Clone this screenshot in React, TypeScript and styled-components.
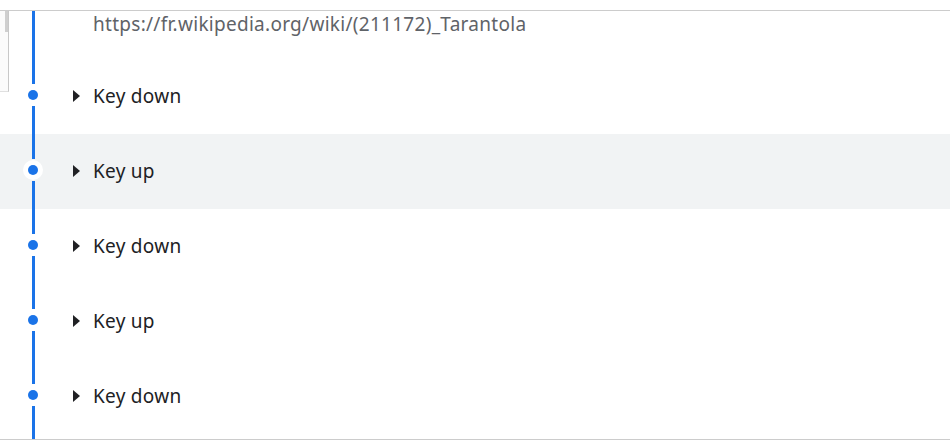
import React from "react";
import styled, { createGlobalStyle } from "styled-components";

const Global = createGlobalStyle`
  html, body { margin: 0; padding: 0; background: #fff; }
  body { font-family: "Noto Sans", "Open Sans", sans-serif; }
  #root { width: 950px; height: 445px; overflow: hidden; }
`;

const Page = styled.div`
  position: relative;
  height: 445px;
  padding-top: 10px;
  box-sizing: border-box;
  display: flex;
  flex-direction: column;
`;

const Frame = styled.div`
  border-top: 1px solid #cccccc;
  border-bottom: 1px solid #cccccc;
  height: 428px;
  display: flex;
  flex-direction: column;
  overflow: hidden;
`;

const SidePane = styled.div`
  position: absolute;
  left: 0;
  top: 11px;
  width: 8px;
  height: 80px;
  border-right: 1px solid #c8c8c8;
  border-bottom: 1px solid #e0e0e0;
  background: #fbfbfb;
  display: flex;
  justify-content: flex-end;
`;

const SideThumb = styled.div`
  width: 3px;
  height: 21px;
  background: #cfcfcf;
`;

const Row = styled.div<{ $h: number; $active?: boolean }>`
  height: ${(p) => p.$h}px;
  flex: 0 0 auto;
  display: flex;
  background: ${(p) => (p.$active ? "#f1f3f4" : "transparent")};
`;

const Gutter = styled.div`
  width: 66px;
  flex: 0 0 66px;
  display: flex;
  flex-direction: column;
  align-items: center;
`;

const Segment = styled.div<{ $fixed?: number }>`
  width: 3px;
  background: #1a73e8;
  flex: ${(p) => (p.$fixed !== undefined ? `0 0 ${p.$fixed}px` : "1 1 auto")};
`;

const Dot = styled.div`
  width: 20px;
  height: 20px;
  margin: 1px 0;
  border-radius: 50%;
  background: #ffffff;
  display: flex;
  align-items: center;
  justify-content: center;
  &::after {
    content: "";
    width: 10px;
    height: 10px;
    border-radius: 50%;
    background: #1a73e8;
  }
`;

const Body = styled.div`
  flex: 1;
  display: flex;
  align-items: flex-start;
`;

const Url = styled.div`
  margin-left: 27px;
  padding-top: 1px;
  font-size: 19px;
  letter-spacing: 0.28px;
  line-height: 24px;
  color: #5f6368;
  white-space: nowrap;
`;

const Entry = styled.div`
  display: flex;
  align-items: center;
  height: 73px;
  margin-left: 7px;
`;

const Caret = styled.span`
  width: 0;
  height: 0;
  border-top: 6px solid transparent;
  border-bottom: 6px solid transparent;
  border-left: 7px solid #202124;
  margin-right: 13px;
`;

const Label = styled.span`
  font-size: 19px;
  letter-spacing: 0.28px;
  line-height: 24px;
  color: #202124;
  white-space: nowrap;
`;

const Tail = styled.div`
  flex: 1;
  display: flex;
`;

const events = ["Key down", "Key up", "Key down", "Key up", "Key down"];

export default function App() {
  return (
    <>
      <Global />
      <Page>
        <Frame>
          <Row $h={48}>
            <Gutter>
              <Segment />
            </Gutter>
            <Body>
              <Url>https://fr.wikipedia.org/wiki/(211172)_Tarantola</Url>
            </Body>
          </Row>
          {events.map((e, i) => (
            <Row key={i} $h={75} $active={i === 1}>
              <Gutter>
                <Segment $fixed={25} />
                <Dot />
                <Segment />
              </Gutter>
              <Body>
                <Entry>
                  <Caret />
                  <Label>{e}</Label>
                </Entry>
              </Body>
            </Row>
          ))}
          <Tail>
            <Gutter>
              <Segment />
            </Gutter>
          </Tail>
        </Frame>
        <SidePane>
          <SideThumb />
        </SidePane>
      </Page>
    </>
  );
}
